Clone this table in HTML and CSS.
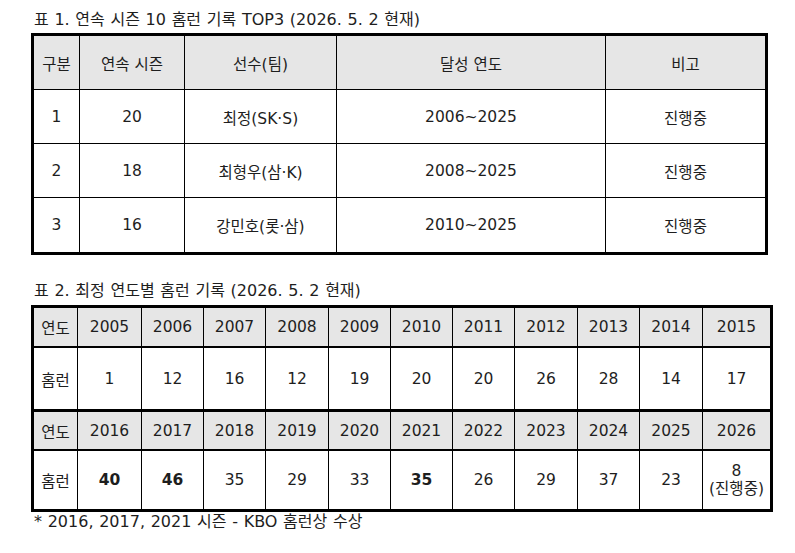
FILE: index.html
```html
<!DOCTYPE html>
<html lang="ko">
<head>
<meta charset="utf-8">
<title>최정 홈런 기록</title>
<link rel="stylesheet" href="styles.css">
</head>
<body>
<div class="page">
  <div class="caption caption-first">표 1. 연속 시즌 10 홈런 기록 TOP3 (2026. 5. 2 현재)</div>
  <div class="t1">
    <div class="c h">구분</div>
    <div class="c h">연속 시즌</div>
    <div class="c h">선수(팀)</div>
    <div class="c h">달성 연도</div>
    <div class="c h">비고</div>

    <div class="c">1</div>
    <div class="c">20</div>
    <div class="c">최정(SK·S)</div>
    <div class="c">2006~2025</div>
    <div class="c">진행중</div>

    <div class="c">2</div>
    <div class="c">18</div>
    <div class="c">최형우(삼·K)</div>
    <div class="c">2008~2025</div>
    <div class="c">진행중</div>

    <div class="c">3</div>
    <div class="c">16</div>
    <div class="c">강민호(롯·삼)</div>
    <div class="c">2010~2025</div>
    <div class="c">진행중</div>
  </div>

  <div class="caption caption-second">표 2. 최정 연도별 홈런 기록 (2026. 5. 2 현재)</div>
  <div class="t2">
    <div class="block block-a">
      <div class="c h">연도</div>
      <div class="c h">2005</div>
      <div class="c h">2006</div>
      <div class="c h">2007</div>
      <div class="c h">2008</div>
      <div class="c h">2009</div>
      <div class="c h">2010</div>
      <div class="c h">2011</div>
      <div class="c h">2012</div>
      <div class="c h">2013</div>
      <div class="c h">2014</div>
      <div class="c h">2015</div>

      <div class="c">홈런</div>
      <div class="c">1</div>
      <div class="c">12</div>
      <div class="c">16</div>
      <div class="c">12</div>
      <div class="c">19</div>
      <div class="c">20</div>
      <div class="c">20</div>
      <div class="c">26</div>
      <div class="c">28</div>
      <div class="c">14</div>
      <div class="c">17</div>
    </div>
    <div class="block block-b">
      <div class="c h">연도</div>
      <div class="c h">2016</div>
      <div class="c h">2017</div>
      <div class="c h">2018</div>
      <div class="c h">2019</div>
      <div class="c h">2020</div>
      <div class="c h">2021</div>
      <div class="c h">2022</div>
      <div class="c h">2023</div>
      <div class="c h">2024</div>
      <div class="c h">2025</div>
      <div class="c h">2026</div>

      <div class="c">홈런</div>
      <div class="c b">40</div>
      <div class="c b">46</div>
      <div class="c">35</div>
      <div class="c">29</div>
      <div class="c">33</div>
      <div class="c b">35</div>
      <div class="c">26</div>
      <div class="c">29</div>
      <div class="c">37</div>
      <div class="c">23</div>
      <div class="c two"><span class="ln">8</span><span class="ln">(진행중)</span></div>
    </div>
  </div>
  <div class="note">* 2016, 2017, 2021 시즌 - KBO 홈런상 수상</div>
</div>
</body>
</html>
```

FILE: styles.css
```css
html, body {
  margin: 0;
  padding: 0;
  background: #ffffff;
}

body {
  font-family: "DejaVu Sans", "Noto Sans CJK KR", sans-serif;
  color: #1e1e1e;
}

.page {
  padding: 7px 0 0 31px;
}

.caption {
  font-size: 16px;
  word-spacing: 0.6px;
  height: 26px;
  line-height: 26px;
  padding-left: 3px;
  white-space: nowrap;
}

.caption-second {
  margin-top: 23px;
  height: 27px;
  line-height: 26px;
}

.t1 {
  display: grid;
  grid-template-columns: 45px 104px 151px 268px 159px;
  grid-template-rows: 53px 53px 53px 54px;
  gap: 1px;
  width: 731px;
  background: #000;
  border: 3px solid #000;
}

.c {
  display: flex;
  align-items: center;
  justify-content: center;
  background: #fff;
  text-align: center;
  white-space: nowrap;
}

.c.h {
  background: #e6e6e6;
}

.t1 .c {
  font-size: 15.5px;
}

.t2 {
  width: 736px;
  border: 3px solid #000;
  background: #000;
}

.block {
  display: grid;
  grid-template-columns: 43px 63px 61px 61px 62px 61px 61px 61px 62px 61px 62px 67px;
  column-gap: 1px;
  row-gap: 2px;
  background: #000;
}

.block-a {
  grid-template-rows: 38px 61px;
}

.block-b {
  grid-template-rows: 37px 58px;
  margin-top: 3px;
}

.t2 .c {
  font-size: 15.5px;
}

.t2 .c.b {
  font-weight: 700;
}

.t2 .c.two {
  flex-direction: column;
  font-size: 15.5px;
}

.ln {
  display: block;
  line-height: 18px;
}

.note {
  font-size: 16px;
  word-spacing: 0.6px;
  line-height: 20px;
  padding-left: 3px;
  white-space: nowrap;
}
```
